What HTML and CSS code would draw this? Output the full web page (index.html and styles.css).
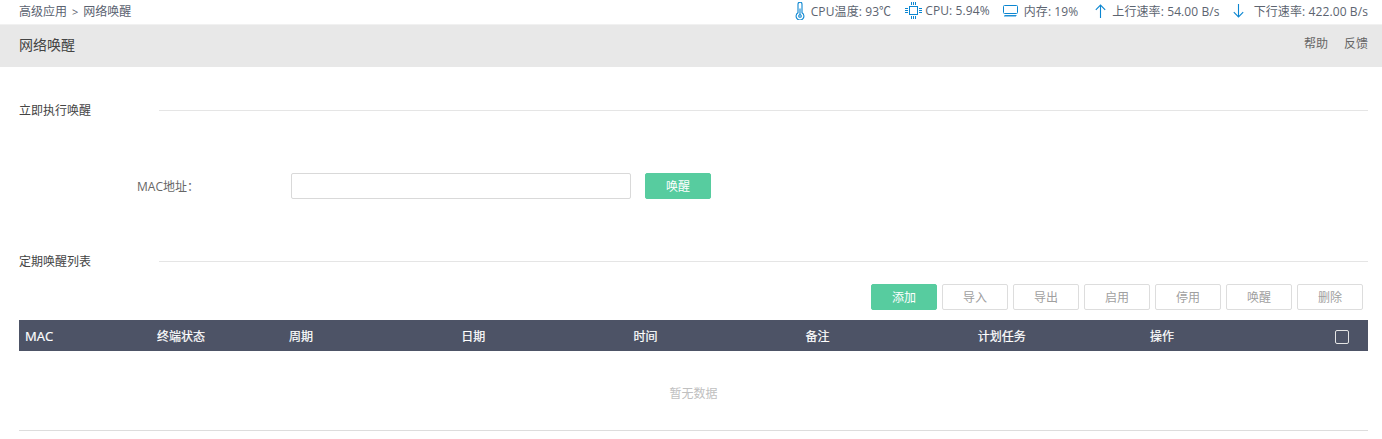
FILE: index.html
```html
<!DOCTYPE html>
<html lang="zh-CN">
<head>
  <meta charset="UTF-8" />
  <title>网络唤醒</title>
  <link rel="stylesheet" href="styles.css">
</head>
<body>
  <!-- 顶部状态栏 -->
  <div class="topbar">
    <div class="crumbs">高级应用<span class="crumb-sep">&gt;</span>网络唤醒</div>
    <div class="stats">
      <div class="stat stat-temp">
        <svg width="10" height="18" viewBox="0 0 10 18" fill="none" stroke="#0b86d1" stroke-width="1.1"><path d="M3 2.200a2 2 0 0 1 4 0v8.600a3.900 3.900 0 1 1-4 0z"/><path d="M5 6.500v6.500"/><circle cx="5" cy="14" r="1.300"/></svg>
        <span>CPU温度: 93℃</span>
      </div>
      <div class="stat stat-cpu">
        <svg width="17" height="17" viewBox="0 0 17 17" fill="none" stroke="#0b86d1" stroke-width="1"><rect x="4.500" y="4.500" width="8" height="8"/><path d="M6.500 0v3M8.500 0v3M10.500 0v3M6.500 14v3M8.500 14v3M10.500 14v3M0 6.500h3M0 8.500h3M0 10.500h3M14 6.500h3M14 8.500h3M14 10.500h3"/></svg>
        <span>CPU: 5.94%</span>
      </div>
      <div class="stat stat-mem">
        <svg width="15" height="12" viewBox="0 0 15 12" fill="none" stroke="#0b86d1" stroke-width="1"><rect x=".5" y=".5" width="14" height="8" rx="1"/><path d="M1.500 10.500h12M2 10.500v1.500M4 10.500v1.500M6 10.500v1.500M8 10.500v1.500M10 10.500v1.500M12 10.500v1.500" stroke-width=".9"/></svg>
        <span>内存: 19%</span>
      </div>
      <div class="stat stat-up">
        <svg width="11" height="14" viewBox="0 0 11 14" fill="none" stroke="#0b86d1" stroke-width="1.1"><path d="M5.500 14V1M.8 5.800 5.500 1l4.700 4.800"/></svg>
        <span>上行速率: 54.00 B/s</span>
      </div>
      <div class="stat stat-down">
        <svg width="11" height="14" viewBox="0 0 11 14" fill="none" stroke="#0b86d1" stroke-width="1.1"><path d="M5.500 0v13M.8 8.200 5.500 13l4.700-4.800"/></svg>
        <span>下行速率: 422.00 B/s</span>
      </div>
    </div>
  </div>

  <div class="page-head">
    <div class="page-title">网络唤醒</div>
    <div class="page-links">
      <a class="page-link">帮助</a>
      <a class="page-link">反馈</a>
    </div>
  </div>

  <div class="content">
    <div class="section-head section-first">
      <div class="section-title">立即执行唤醒</div>
      <div class="section-line"></div>
    </div>

    <div class="form-row">
      <label class="form-label">MAC地址：</label>
      <input class="form-input" type="text" />
      <button class="btn btn-green btn-wake">唤醒</button>
    </div>

    <div class="section-head">
      <div class="section-title">定期唤醒列表</div>
      <div class="section-line"></div>
    </div>

    <div class="toolbar">
      <button class="btn btn-green">添加</button>
      <button class="btn">导入</button>
      <button class="btn">导出</button>
      <button class="btn">启用</button>
      <button class="btn">停用</button>
      <button class="btn">唤醒</button>
      <button class="btn">删除</button>
    </div>

    <table class="list">
      <colgroup>
        <col class="col-short"><col class="col-short">
        <col class="col-wide"><col class="col-wide"><col class="col-wide"><col class="col-wide"><col class="col-wide"><col class="col-wide">
        <col class="col-check">
      </colgroup>
      <thead>
        <tr>
          <th class="mac-cell">MAC</th>
          <th>终端状态</th>
          <th>周期</th>
          <th>日期</th>
          <th>时间</th>
          <th>备注</th>
          <th>计划任务</th>
          <th>操作</th>
          <th class="check-cell"><span class="check"></span></th>
        </tr>
      </thead>
      <tbody>
        <tr>
          <td class="empty" colspan="9">暂无数据</td>
        </tr>
      </tbody>
    </table>
  </div>
</body>
</html>
```

FILE: styles.css
```css
html, body {
  margin: 0;
  padding: 0;
  background: #fff;
  overflow: hidden;
  font-family: "Open Sans", "Noto Sans CJK SC", sans-serif;
  font-size: 12px;
  color: #555;
}

.topbar {
  display: flex;
  justify-content: space-between;
  align-items: center;
  box-sizing: content-box;
  height: 21px;
  padding: 0 14px 3px 19px;
  border-bottom: 1px solid #f1f1f1;
}

.crumbs { color: #5a6270; }
.crumb-sep { margin: 0 5px; font-size: 11px; }

.stats {
  display: flex;
  align-items: center;
}

.stat {
  display: flex;
  align-items: center;
  color: #5c6470;
  letter-spacing: 0.1px;
  white-space: nowrap;
}

.stat-temp { gap: 6px; }
.stat-cpu { margin-left: 14px; gap: 3px; }
.stat-mem { margin-left: 13px; gap: 6px; }
.stat-up { margin-left: 17px; gap: 6px; }
.stat-down { margin-left: 13px; gap: 10px; }

.page-head {
  display: flex;
  justify-content: space-between;
  align-items: center;
  height: 37px;
  padding: 0 14px 5px 19px;
  background: #e8e8e8;
}

.page-title {
  font-size: 14px;
  color: #444;
}

.page-links {
  display: flex;
  gap: 16px;
  margin-bottom: 2px;
  color: #666;
}

.content {
  padding: 0 14px 0 19px;
}

.section-head {
  display: flex;
  align-items: center;
  height: 20px;
}

.section-first { margin-top: 33px; }

.section-title {
  width: 140px;
  flex: none;
  color: #444;
}

.section-line {
  flex: 1;
  height: 1px;
  background: #e5e5e5;
}

.form-row {
  display: flex;
  align-items: center;
  height: 26px;
  margin: 53px 0 52px 118px;
}

.form-label {
  width: 154px;
  color: #666;
}

.form-input {
  box-sizing: border-box;
  width: 340px;
  height: 26px;
  margin: 0 14px 0 0;
  border: 1px solid #d9d9d9;
  border-radius: 2px;
  outline: none;
}

.btn {
  box-sizing: border-box;
  width: 66px;
  height: 26px;
  padding: 0;
  border: 1px solid #ddd;
  border-radius: 2px;
  background: #fff;
  color: #a0a0a0;
  font-family: inherit;
  font-size: 12px;
}

.btn-green {
  background: #57cc9f;
  border-color: #57cc9f;
  color: #fff;
}

.toolbar {
  display: flex;
  justify-content: flex-end;
  gap: 5px;
  margin-top: 13px;
  padding-right: 5px;
}

.list {
  width: 100%;
  margin-top: 10px;
  border-collapse: collapse;
  table-layout: fixed;
}

.col-short { width: 132px; }
.col-wide { width: 172.2px; }
.col-check { width: 51.8px; }

.list th {
  height: 31px;
  padding: 0 6px;
  background: #4d5366;
  color: #fff;
  font-weight: 400;
  font-size: 12px;
  text-align: left;
  -webkit-text-stroke: 0.2px #fff;
}

.list .mac-cell { font-size: 13px; }

.list .check-cell {
  padding: 0 19px 0 0;
  text-align: right;
}

.check {
  display: inline-block;
  box-sizing: border-box;
  width: 14px;
  height: 14px;
  border: 1px solid #e4e4e4;
  border-radius: 2px;
  vertical-align: middle;
}

.empty {
  height: 75px;
  padding: 4px 0 0;
  border-bottom: 1px solid #ddd;
  color: #c0c0c0;
  text-align: center;
}
```
